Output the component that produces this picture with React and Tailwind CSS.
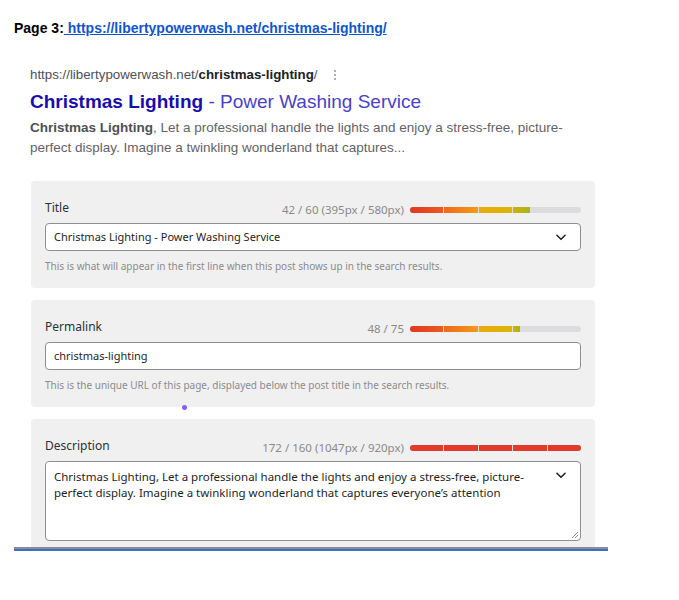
import React from 'react';

const ui = { fontFamily: '"Noto Sans", "Open Sans", sans-serif' };
const serp = { fontFamily: '"Liberation Sans", Arial, sans-serif' };

// five-part length meter: fill goes left to right over a grey track
const Meter = ({ fill, colors }) => (
    <div className="relative flex h-[6px] w-[171px] gap-px rounded-[3px] bg-[#dcdcde] overflow-hidden">
        {colors.map((c, i) => {
            const part = Math.max(0, Math.min(1, fill - i));
            return (
                <div key={i} className="h-full flex-1">
                    <div className="h-full" style={{ width: `${part * 100}%`, background: c }} />
                </div>
            );
        })}
    </div>
);

const warm = [
    'linear-gradient(90deg,#e0371f,#ec5a21)',
    'linear-gradient(90deg,#ee6a1c,#f39a14)',
    'linear-gradient(90deg,#eaa90c,#dab505)',
    'linear-gradient(90deg,#cbb20e,#a8b41a)',
    '#a8b41a',
];
const red = ['#e03c2c', '#e03c2c', '#e03c2c', '#e03c2c', '#e03c2c'];

const Chevron = () => (
    <svg width="14" height="14" viewBox="0 0 24 24" fill="none" stroke="#1e1e1e" strokeWidth="2.6" strokeLinecap="round" strokeLinejoin="round">
        <path d="M5 9l7 7 7-7" />
    </svg>
);

const Field = ({ label, count, fill, colors, children, help, className = '' }) => (
    <div className={`rounded-[4px] bg-[#f0f0f1] px-[14px] pt-[19px] pb-[15px] ${className}`}>
        <div className="flex h-[16px] items-center justify-between">
            <span className="text-[12px] text-[#2c3338]">{label}</span>
            <div className="flex items-center gap-[6px] pt-[3px]">
                <span className="text-[11.5px] text-[#8a8a8a]">{count}</span>
                <Meter fill={fill} colors={colors} />
            </div>
        </div>
        <div className="mt-[7px]">{children}</div>
        {help && <p className="mt-[8px] text-[10px] leading-[14px] text-[#8c8c8c]">{help}</p>}
    </div>
);

export default function App() {
    return (
        <div className="min-h-[600px] w-[679px] bg-white">
            <div className="pl-[14px] pt-[19px] text-[14px] leading-[18px] font-bold" style={serp}>
                <span className="text-black">Page 3:</span>
                <a className="text-[#1155cc] underline"> https://libertypowerwash.net/christmas-lighting/</a>
            </div>

            <div className="pl-[30px] pt-[30px] pr-[109px]" style={serp}>
                <div className="flex h-[16px] items-center text-[13.3px] text-[#4d5156]">
                    <span>https://libertypowerwash.net/<b className="text-[#202124]">christmas-lighting</b>/</span>
                    <svg className="ml-[16px]" width="4" height="12" viewBox="0 0 4 12" fill="#9aa0a6">
                        <circle cx="2" cy="2" r="1.1" />
                        <circle cx="2" cy="6" r="1.1" />
                        <circle cx="2" cy="10" r="1.1" />
                    </svg>
                </div>
                <div className="mt-[7px] text-[19px] leading-[24px]">
                    <span className="font-bold text-[#1a0dab]">Christmas Lighting</span>
                    <span className="text-[#4b3fc4]"> - Power Washing Service</span>
                </div>
                <p className="mt-[4px] text-[13.5px] leading-[20px] text-[#5f6368]">
                    <b className="text-[#4d5156]">Christmas Lighting</b>, Let a professional handle the lights and enjoy a stress-free, picture-perfect display. Imagine a twinkling wonderland that captures...
                </p>
            </div>

            <div className="ml-[31px] mt-[23px] w-[564px]" style={ui}>
                <Field label="Title" count="42 / 60 (395px / 580px)" fill={3.5} colors={warm}
                    help="This is what will appear in the first line when this post shows up in the search results.">
                    <div className="flex h-[28px] items-center justify-between rounded-[4px] border border-[#8c8f94] bg-white pl-[8px] pr-[12px] text-[11px] text-[#1e1e1e]">
                        <span>Christmas Lighting - Power Washing Service</span>
                        <Chevron />
                    </div>
                </Field>

                <Field className="mt-[12px]" label="Permalink" count="48 / 75" fill={3.2} colors={warm}
                    help="This is the unique URL of this page, displayed below the post title in the search results.">
                    <div className="flex h-[28px] items-center rounded-[4px] border border-[#8c8f94] bg-white pl-[8px] text-[11px] text-[#1e1e1e]">
                        christmas-lighting
                    </div>
                </Field>

                <div className="relative h-[12px]">
                    <span className="absolute left-[151px] top-[-2px] block h-[5px] w-[5px] rounded-full bg-[#8b5cf6]" />
                </div>

                <div className="h-[128px] overflow-hidden">
                    <Field label="Description" count="172 / 160 (1047px / 920px)" fill={5} colors={red}>
                        <div className="relative h-[80px] rounded-[4px] border border-[#8c8f94] bg-white pl-[8px] pr-[45px] pt-[7px] text-[11.5px] leading-[16px] text-[#1e1e1e]">
                            Christmas Lighting, Let a professional handle the lights and enjoy a stress-free, picture-perfect display. Imagine a twinkling wonderland that captures everyone’s attention
                            <span className="absolute right-[12px] top-[6px]"><Chevron /></span>
                            <svg className="absolute bottom-[1px] right-[1px]" width="8" height="8" viewBox="0 0 8 8" stroke="#777" strokeWidth="0.8">
                                <path d="M7 1L1 7M7 4L4 7" />
                            </svg>
                        </div>
                    </Field>
                </div>
            </div>

            <div className="ml-[14px] w-[594px]">
                <div className="h-[2px] bg-[#8c8c8c]" />
                <div className="h-[2px] bg-[#3a6fd0]" />
            </div>
        </div>
    );
}
